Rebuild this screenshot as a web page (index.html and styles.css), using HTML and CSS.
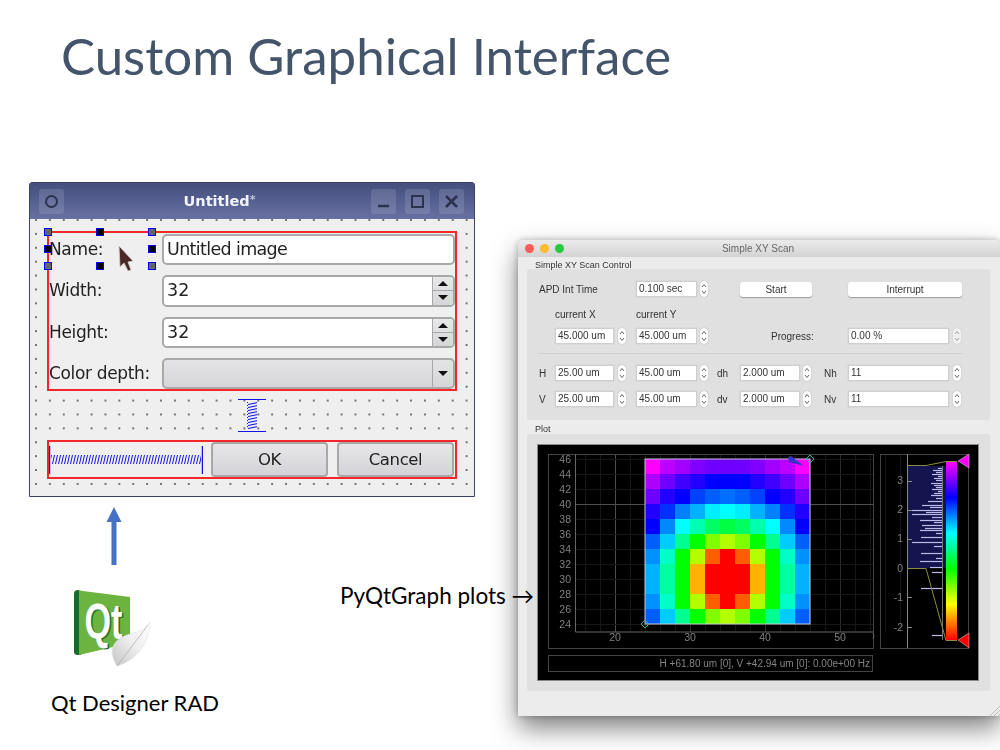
FILE: index.html
```html
<!DOCTYPE html>
<html lang="en">
<head>
  <meta charset="UTF-8">
  <title>Custom Graphical Interface</title>
  <link rel="stylesheet" href="styles.css">
</head>
<body>
  <main class="slide">
    <h1 class="slide-title">Custom Graphical Interface</h1>

    <!-- Qt Designer window -->
    <section class="qt-window">
      <div class="qt-title">
        <span class="qt-btn">
          <svg width="25" height="25" viewBox="0 0 25 25"><circle cx="12.5" cy="12.5" r="5.5" fill="none" stroke="#2c3350" stroke-width="2"/></svg>
        </span>
        <span class="qt-caption">Untitled<small>*</small></span>
        <span class="qt-btn">
          <svg width="25" height="25" viewBox="0 0 25 25"><path d="M7 17h11" stroke="#2c3350" stroke-width="2.5"/></svg>
        </span>
        <span class="qt-btn">
          <svg width="25" height="25" viewBox="0 0 25 25"><rect x="7" y="7" width="11" height="11" fill="none" stroke="#2c3350" stroke-width="2"/></svg>
        </span>
        <span class="qt-btn">
          <svg width="25" height="25" viewBox="0 0 25 25"><path d="M7 7l11 11M18 7L7 18" stroke="#2c3350" stroke-width="2.5"/></svg>
        </span>
      </div>
      <div class="qt-body">
        <div class="qt-form layout-box">
          <label>Name:</label>
          <div class="qt-field"><span class="qt-value tight">Untitled image</span></div>
          <label>Width:</label>
          <div class="qt-field">
            <span class="qt-value">32</span>
            <span class="qt-spin"><i class="arrow-up"></i><i class="arrow-down"></i></span>
          </div>
          <label>Height:</label>
          <div class="qt-field">
            <span class="qt-value">32</span>
            <span class="qt-spin"><i class="arrow-up"></i><i class="arrow-down"></i></span>
          </div>
          <label>Color depth:</label>
          <div class="qt-field qt-combo">
            <span class="qt-value"></span>
            <span class="qt-drop"><i class="arrow-down"></i></span>
          </div>
        </div>

        <svg class="v-spring" width="28" height="33" viewBox="0 0 28 33">
          <defs>
            <pattern id="coil-v" width="10" height="3" patternUnits="userSpaceOnUse">
              <path d="M0 2.500L10 .5" stroke="#1414e6" stroke-width="1.1"/>
            </pattern>
          </defs>
          <path d="M0 .5h28M0 32.500h28" stroke="#1414e6"/>
          <rect x="9" y="3" width="10" height="27" fill="url(#coil-v)"/>
        </svg>

        <div class="qt-buttons layout-box">
          <svg class="h-spring" width="154" height="28" viewBox="0 0 154 28">
            <defs>
              <pattern id="coil" width="3" height="9" patternUnits="userSpaceOnUse">
                <path d="M.5 9L2.500 0" stroke="#1414e6" stroke-width="1"/>
              </pattern>
            </defs>
            <path d="M.5 0v28M153.500 0v28" stroke="#1414e6" stroke-width="1.500"/>
            <rect x="2" y="9" width="150" height="9" fill="url(#coil)"/>
          </svg>
          <button class="qt-push">OK</button>
          <button class="qt-push">Cancel</button>
        </div>
      </div>

      <!-- selection handles round the Name label -->
      <i class="handle grey" style="left:14px;top:45px"></i>
      <i class="handle" style="left:66px;top:45px"></i>
      <i class="handle grey" style="left:118px;top:45px"></i>
      <i class="handle" style="left:14px;top:62px"></i>
      <i class="handle" style="left:118px;top:62px"></i>
      <i class="handle grey" style="left:14px;top:79px"></i>
      <i class="handle" style="left:66px;top:79px"></i>
      <i class="handle grey" style="left:118px;top:79px"></i>

      <svg class="qt-cursor" width="20" height="28" viewBox="0 0 20 28">
        <path d="M2 1l14 15-5 1 3 8-3 1-4-8-4 4z" fill="#4a2a26" stroke="#cfcfcf" stroke-width=".8"/>
      </svg>
    </section>

    <!-- arrow and Qt logo -->
    <svg class="up-arrow" width="16" height="59" viewBox="0 0 16 59">
      <path d="M8 0l7.500 15H10.500v43h-5V15H.5z" fill="#4472c4"/>
    </svg>

    <svg class="qt-logo" width="80" height="80" viewBox="73 589 80 80">
      <defs>
        <linearGradient id="leaf" x1="0" y1="1" x2="1" y2="0">
          <stop offset="0" stop-color="#c4c4c4"/>
          <stop offset=".55" stop-color="#f0f0f0"/>
          <stop offset="1" stop-color="#fff"/>
        </linearGradient>
      </defs>
      <path d="M78 590l3 1v64l-3 0q-4 0-4-3v-58q0-4 4-4z" fill="#146b2a"/>
      <path d="M79 590.500l51 6.500v46l-51 12z" fill="#6cb43f"/>
      <text class="qt-mark shade" x="86" y="640" textLength="38" lengthAdjust="spacingAndGlyphs">Qt</text>
      <text class="qt-mark" x="84.500" y="639" textLength="38" lengthAdjust="spacingAndGlyphs">Qt</text>
      <path d="M150 622c0 18-12 38-33 44-7-12-7-22 5-29 11-5 21-4 28-15z" fill="url(#leaf)" stroke="#ddd" stroke-width=".6"/>
      <path d="M148 625l-31 41" stroke="#a9a9a9" stroke-width=".7"/>
    </svg>

    <p class="slide-note qt-note">Qt Designer RAD</p>

    <!-- Simple XY Scan window -->
    <section class="mac-window">
      <div class="mac-title">
        <span class="light red"></span>
        <span class="light amber"></span>
        <span class="light green"></span>
        <span class="mac-caption">Simple XY Scan</span>
      </div>

      <div class="mac-body">
        <div class="group-label">Simple XY Scan Control</div>
        <div class="group scan-control">
          <div class="scan-row">
            <span class="c-wide">APD Int Time</span>
            <span class="num c-4">0.100 sec</span>
            <svg class="spin s-3"><use href="#updown"/></svg>
            <button class="mac-push c-start">Start</button>
            <button class="mac-push c-stop">Interrupt</button>
          </div>
          <div class="scan-row row-caption">
            <span class="c-2">current X</span>
            <span class="c-4">current Y</span>
          </div>
          <div class="scan-row row-tight">
            <span class="num c-2">45.000 um</span>
            <svg class="spin s-4"><use href="#updown"/></svg>
            <span class="num">45.000 um</span>
            <svg class="spin s-3"><use href="#updown"/></svg>
            <span class="c-progress">Progress:</span>
            <span class="num c-10">0.00 %</span>
            <svg class="spin s-4 off"><use href="#updown"/></svg>
          </div>
          <hr class="scan-rule">
          <div class="scan-row">
            <span>H</span>
            <span class="num">25.00 um</span>
            <svg class="spin s-4"><use href="#updown"/></svg>
            <span class="num">45.00 um</span>
            <svg class="spin s-3"><use href="#updown"/></svg>
            <span>dh</span>
            <span class="num">2.000 um</span>
            <svg class="spin s-3"><use href="#updown"/></svg>
            <span>Nh</span>
            <span class="num">11</span>
            <svg class="spin s-4"><use href="#updown"/></svg>
          </div>
          <div class="scan-row row-gap">
            <span>V</span>
            <span class="num">25.00 um</span>
            <svg class="spin s-4"><use href="#updown"/></svg>
            <span class="num">45.00 um</span>
            <svg class="spin s-3"><use href="#updown"/></svg>
            <span>dv</span>
            <span class="num">2.000 um</span>
            <svg class="spin s-3"><use href="#updown"/></svg>
            <span>Nv</span>
            <span class="num">11</span>
            <svg class="spin s-4"><use href="#updown"/></svg>
          </div>
        </div>

        <div class="group-label plot-label">Plot</div>
        <div class="group plot-group">
          <svg class="plot" id="plot" width="440" height="235" viewBox="538 445 440 235">
            <defs>
              <linearGradient id="lut" x1="0" y1="0" x2="0" y2="1">
                <stop offset="0" stop-color="#f0f"/>
                <stop offset=".2" stop-color="#00f"/>
                <stop offset=".4" stop-color="#0ff"/>
                <stop offset=".6" stop-color="#0f0"/>
                <stop offset=".8" stop-color="#ff0"/>
                <stop offset="1" stop-color="#f00"/>
              </linearGradient>
            </defs>
            <g id="plot-grid"></g>
            <rect x="548.500" y="454.500" width="325" height="194" fill="none" stroke="#444"/>
            <path d="M575.500 454v178H873" fill="none" stroke="#666"/>
            <path d="M873 633q2 3 0 6" fill="none" stroke="#666"/>
            <g id="plot-heat"></g>
            <rect x="645" y="459" width="165" height="165" fill="none" stroke="#c8c8d8"/>
            <path d="M645 620l4 4-4 4-4-4zM810 455l4 4-4 4-4-4z" fill="none" stroke="#3fb0a0"/>
            <path d="M788 457l3-1 13 10-15-4z" fill="#3535c8"/>
            <g id="plot-ticks" class="tick"></g>
            <rect x="548.500" y="655.500" width="324" height="16" fill="none" stroke="#444"/>
            <text class="status" x="870" y="666.500" text-anchor="end">H +61.80 um [0], V +42.94 um [0]: 0.00e+00 Hz</text>

            <!-- histogram and colour bar -->
            <rect x="880.500" y="454.500" width="88" height="194" fill="none" stroke="#444"/>
            <rect x="908" y="466" width="38" height="102" fill="#14144e"/>
            <g id="hist-bars" stroke="#bcbcea" stroke-width="1.200"></g>
            <path d="M942.500 466V640" stroke="#777"/>
            <path d="M907.500 454v194M908 481.500h4M908 510.500h4M908 539.500h4M908 568.500h4M908 597.500h4M908 627.500h4" fill="none" stroke="#888"/>
            <g class="tick" text-anchor="end">
              <text x="903" y="484">3</text>
              <text x="903" y="513">2</text>
              <text x="903" y="542">1</text>
              <text x="903" y="572">0</text>
              <text x="903" y="601">-1</text>
              <text x="903" y="631">-2</text>
            </g>
            <path d="M908 465.500h18l20-4h11M908 568.500h18l20 72h11" fill="none" stroke="#8c8c3c"/>
            <rect x="946" y="462" width="11" height="178" fill="url(#lut)"/>
            <path d="M958 461l11-7v14z" fill="#f0f" stroke="#bbb" stroke-width=".6"/>
            <path d="M958 640l11-7v15z" fill="#f00" stroke="#bbb" stroke-width=".6"/>
          </svg>
        </div>
      </div>

      <svg class="grip" width="10" height="10" viewBox="0 0 10 10">
        <path d="M0 10L10 0M4 10l6-6M8 10l2-2" stroke="#bbb"/>
      </svg>
    </section>

    <p class="slide-note plots-note">PyQtGraph plots &rarr;</p>
  </main>

  <svg class="sprite" width="0" height="0">
    <symbol id="updown" viewBox="0 0 8 16">
      <path d="M2 6l2-2.500L6 6M2 10l2 2.500L6 10" fill="none" stroke="#555" stroke-width=".9"/>
    </symbol>
  </svg>

  <script src="script.js"></script>
</body>
</html>
```

FILE: styles.css
```css
* {
  box-sizing: border-box;
  margin: 0;
  padding: 0;
}

body {
  background-color: #fff;
  font-family: 'Lato', 'Liberation Sans', sans-serif;
}

.sprite {
  position: absolute;
}

.slide {
  position: relative;
  width: 1000px;
  height: 750px;
  overflow: hidden;
  background-color: #fff;
}

.slide-title {
  padding: 26px 0 0 61px;
  font-size: 51px;
  font-weight: 400;
  line-height: 60px;
  color: #44546a;
}

.slide-note {
  position: absolute;
  font-size: 22px;
  line-height: 26px;
  color: #000;
}

.qt-note {
  left: 51px;
  top: 690px;
}

.plots-note {
  left: 340px;
  top: 583px;
  font-size: 22.500px;
}

.up-arrow {
  position: absolute;
  left: 106px;
  top: 507px;
}

.qt-logo {
  position: absolute;
  left: 73px;
  top: 589px;
}

.qt-mark {
  font-family: 'Liberation Sans', sans-serif;
  font-size: 50px;
  font-weight: bold;
  fill: #fff;
}

.qt-mark.shade {
  fill: #1c6e2b;
}

/* Qt Designer window */
.qt-window {
  position: absolute;
  left: 29px;
  top: 182px;
  width: 446px;
  height: 315px;
  border: 1px solid #3a4163;
  border-radius: 3px 3px 0 0;
  font-family: 'DejaVu Sans', sans-serif;
  color: #222;
  filter: blur(0.3px);
}

.qt-title {
  display: flex;
  align-items: center;
  gap: 9px;
  height: 36px;
  padding: 0 10px 0 9px;
  background: linear-gradient(#444f7e, #6871a2);
}

.qt-btn {
  width: 25px;
  height: 25px;
  border-radius: 3px;
  background-color: rgba(255, 255, 255, 0.12);
}

.qt-caption {
  flex: 1;
  padding-left: 4px;
  text-align: center;
  font-size: 14.500px;
  font-weight: bold;
  color: #f2f3f8;
}

.qt-caption small {
  font-size: 11px;
  vertical-align: 3px;
  color: #bfc3d8;
}

.qt-body {
  display: flex;
  flex-direction: column;
  align-items: center;
  height: 277px;
  padding: 12px 17px 0;
  background-color: #efefef;
  background-image: radial-gradient(circle at 1px 1px, #222 0.5px, transparent 1px);
  background-size: 13.900px 13.900px;
  background-position: 5px 0;
}

.layout-box {
  width: 410px;
  border: 2px solid #f3262c;
  background-color: #efefef;
}

.qt-form {
  display: grid;
  grid-template-columns: 113px 1fr;
  grid-template-rows: repeat(4, 1fr);
  row-gap: 10px;
  height: 160px;
  padding: 1px 0 0;
}

.qt-form label {
  font-size: 17px;
  letter-spacing: -0.35px;
  line-height: 31px;
}

.qt-field {
  display: flex;
  overflow: hidden;
  border: 2px solid #a8a8a8;
  border-radius: 5px;
  background-color: #fff;
}

.qt-value {
  flex: 1;
  padding-left: 3px;
  font-size: 17.500px;
  line-height: 27px;
}

.qt-value.tight {
  letter-spacing: -0.65px;
}

.qt-spin {
  display: flex;
  flex-direction: column;
  width: 21px;
  border-left: 1px solid #a8a8a8;
  background: linear-gradient(#e8e8ea, #d6d6da);
}

.qt-spin i,
.qt-drop i {
  flex: 1;
  display: flex;
  align-items: center;
  justify-content: center;
}

.qt-spin i:first-child {
  border-bottom: 1px solid #a8a8a8;
}

.qt-spin i::before,
.qt-drop i::before {
  content: "";
  border-left: 5px solid transparent;
  border-right: 5px solid transparent;
}

.arrow-up::before {
  border-bottom: 5px solid #111;
}

.arrow-down::before {
  border-top: 5px solid #111;
}

.qt-combo {
  background: linear-gradient(#e4e4e6, #d6d6da);
}

.qt-drop {
  display: flex;
  align-items: stretch;
  width: 21px;
  border-left: 1px solid #a8a8a8;
}

.v-spring {
  flex: none;
  margin-top: 8px;
}

.qt-buttons {
  display: flex;
  align-items: center;
  gap: 9px;
  height: 39px;
  margin-top: 8px;
  padding: 0 1px 0 0;
}

.h-spring {
  flex: none;
  margin-right: -1px;
}

.qt-push {
  flex: 1;
  height: 35px;
  border: 2px solid #a8a8a8;
  border-radius: 4px;
  background: linear-gradient(#e6e6e8, #d4d4d8);
  font-family: inherit;
  font-size: 16.500px;
  letter-spacing: -0.4px;
  color: #222;
}

.handle {
  position: absolute;
  width: 8px;
  height: 8px;
  border: 1px solid #0000ff;
  background-color: #000;
}

.handle.grey {
  background-color: #666;
}

.qt-cursor {
  position: absolute;
  left: 87px;
  top: 62px;
}

/* Simple XY Scan window */
.mac-window {
  position: absolute;
  left: 518px;
  top: 240px;
  width: 482px;
  height: 476px;
  border-radius: 5px 5px 0 0;
  background-color: #ececec;
  box-shadow: 0 12px 26px rgba(0, 0, 0, 0.5), 0 0 6px rgba(0, 0, 0, 0.25);
  font-family: 'Liberation Sans', sans-serif;
  color: #333;
  filter: blur(0.4px);
}

.mac-title {
  display: flex;
  align-items: center;
  gap: 6px;
  height: 17px;
  padding-left: 7px;
  border-radius: 5px 5px 0 0;
  background: linear-gradient(#ebebeb, #d3d3d3);
}

.light {
  width: 9px;
  height: 9px;
  border-radius: 50%;
}

.light.red {
  background-color: #fc5b57;
}

.light.amber {
  background-color: #fdbc2e;
}

.light.green {
  background-color: #28c83f;
}

.mac-caption {
  position: absolute;
  left: 0;
  right: 0;
  padding-right: 2px;
  text-align: center;
  font-size: 10px;
  color: #666;
}

.mac-body {
  padding: 4px 10px 0 9px;
}

.group-label {
  height: 8px;
  padding-left: 8px;
  font-size: 9px;
  line-height: 8px;
}

.plot-label {
  margin-top: 5px;
  height: 9px;
  line-height: 9px;
}

.group {
  border-radius: 3px;
  background-color: #e0e0e0;
}

.scan-control {
  height: 151px;
  padding: 12px 0 0 12px;
}

.scan-row {
  display: grid;
  grid-template-columns: 16px 59px 22px 61px 20px 23px 60px 24px 24px 101px 13px;
  align-items: center;
  height: 16px;
  font-size: 10px;
}

.row-caption {
  margin-top: 9px;
}

.row-tight {
  margin-top: 6px;
}

.row-gap {
  margin-top: 10px;
}

.c-wide {
  grid-column: 1 / 4;
}

.c-2 {
  grid-column: 2;
}

.c-4 {
  grid-column: 4;
}

.c-10 {
  grid-column: 10;
}

.c-start {
  grid-column: 7 / 9;
  width: 72px;
}

.c-stop {
  grid-column: 10 / 12;
}

.c-progress {
  grid-column: 7 / 10;
  padding-left: 31px;
}

.num {
  height: 16px;
  padding-left: 2px;
  border: 1px solid #cfcfcf;
  background-color: #fff;
  box-shadow: 0 0 1px rgba(0, 0, 0, 0.2);
  font-size: 10px;
  line-height: 14px;
}

.spin {
  width: 8px;
  height: 16px;
  border-radius: 4px;
  background-color: #fff;
  box-shadow: 0 0 1px rgba(0, 0, 0, 0.45);
}

.s-3 {
  margin-left: 3px;
}

.s-4 {
  margin-left: 4px;
}

.spin.off {
  opacity: 0.55;
}

.mac-push {
  height: 15px;
  border: none;
  border-radius: 3px;
  background-color: #fff;
  box-shadow: 0 1px 1px rgba(0, 0, 0, 0.3);
  font-family: inherit;
  font-size: 10px;
  color: #333;
}

.scan-rule {
  width: 424px;
  height: 1px;
  margin: 9px 0 11px;
  border: none;
  background-color: #d0d0d0;
}

.plot-group {
  height: 257px;
  padding: 11px 0 0 11px;
}

.plot {
  display: block;
  background-color: #000;
  box-shadow: 0 0 0 1px #888;
}

.tick {
  font-family: 'Liberation Sans', sans-serif;
  font-size: 10.500px;
  fill: #808080;
}

.status {
  font-family: 'Liberation Sans', sans-serif;
  font-size: 10px;
  fill: #848484;
}

.grip {
  position: absolute;
  right: 0;
  bottom: 0;
}
```

FILE: script.js
```js
const SVG_NS = "http://www.w3.org/2000/svg";

// hue of each heat map cell, left half of the row, the right half mirrors it
const hues = [
  [300, 284, 278, 270, 266, 266],
  [281, 266, 255, 248, 240, 240],
  [266, 248, 240, 225, 218, 214],
  [248, 229, 210, 198, 184, 180],
  [240, 208, 180, 161, 143, 135],
  [218, 192, 154, 120, 90, 78],
  [206, 167, 120, 78, 22, 0],
  [198, 158, 120, 42, 0, 0],
  [198, 158, 120, 42, 0, 0],
  [206, 167, 120, 78, 22, 0],
  [218, 192, 154, 120, 90, 78]
];

const xPos = v => 615 + (v - 20) * 7.5;
const yPos = v => 459 + (46 - v) * 7.5;

function add(parent, tag, attrs, text) {
  const el = document.createElementNS(SVG_NS, tag);
  Object.keys(attrs).forEach(k => el.setAttribute(k, attrs[k]));
  if (text !== undefined) el.textContent = text;
  parent.appendChild(el);
}

function drawGrid() {
  const grid = document.getElementById("plot-grid");
  for (let v = 16; v <= 58; v += 2) {
    const major = v === 20;
    const x = Math.floor(xPos(v)) + 0.5;
    add(grid, "path", { d: `M${x} 454V632`, stroke: major ? "#4e4e4e" : v % 10 === 0 ? "#2c2c2c" : "#171717" });
  }
  for (let v = 24; v <= 46; v += 2) {
    const major = v === 40;
    const y = Math.floor(yPos(v)) + 0.5;
    add(grid, "path", { d: `M575 ${y}H873`, stroke: major ? "#4e4e4e" : "#171717" });
  }
}

function drawHeat() {
  const heat = document.getElementById("plot-heat");
  hues.forEach((half, row) => {
    const cells = half.concat(half.slice(0, 5).reverse());
    cells.forEach((h, col) => {
      add(heat, "rect", {
        x: 645 + col * 15,
        y: 459 + row * 15,
        width: 15,
        height: 15,
        fill: `hsl(${h}, 100%, 50%)`
      });
    });
  });
}

function drawTicks() {
  const ticks = document.getElementById("plot-ticks");
  for (let v = 24; v <= 46; v += 2) {
    add(ticks, "text", { x: 571, y: yPos(v) + 4, "text-anchor": "end" }, v);
  }
  [20, 30, 40, 50].forEach(v => {
    add(ticks, "text", { x: xPos(v), y: 641, "text-anchor": "middle" }, v);
  });
}

function drawHistogram() {
  const bars = document.getElementById("hist-bars");
  // [y, left end of the bar], all bars run right to x = 942
  const rows = [
    [468, 938], [470, 933], [472, 936], [474, 932], [476, 938], [478, 934],
    [480, 936], [483, 931], [485, 934], [487, 936], [489, 932], [491, 938],
    [493, 934], [495, 931], [498, 936], [501, 928], [505, 922], [507, 930],
    [510, 912], [512, 926], [514, 912], [517, 932], [520, 920], [522, 934],
    [525, 922], [528, 925], [530, 920], [533, 936], [537, 921], [542, 912],
    [546, 934], [553, 921], [558, 936], [561, 920], [567, 930], [572, 932],
    [588, 921], [635, 932]
  ];
  rows.forEach(r => add(bars, "path", { d: `M${r[1]} ${r[0] + 0.5}H942` }));
}

drawGrid();
drawHeat();
drawTicks();
drawHistogram();
```
